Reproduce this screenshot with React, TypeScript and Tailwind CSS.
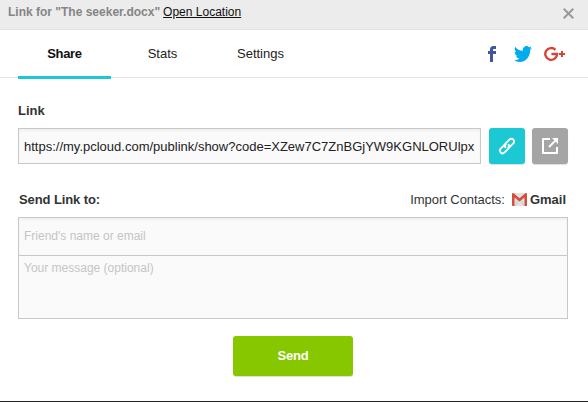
import React from "react";

function FacebookIcon() {
  return (
    <svg width="8" height="16" viewBox="0 0 8 16" fill="#4255a0">
      <path d="M2 16V8H0V5h2V3.6C2 1.3 3.2 0 5.4 0H8v3H6.2C5.3 3 5 3.3 5 4v1h3v3H5v8Z" />
    </svg>
  );
}

function TwitterIcon() {
  return (
    <svg width="18" height="16" viewBox="0 2.2 24 19.6" preserveAspectRatio="none" fill="#00aced">
      <path d="M23.953 4.57a10 10 0 01-2.825.775 4.958 4.958 0 002.163-2.723c-.951.555-2.005.959-3.127 1.184a4.92 4.92 0 00-8.384 4.482C7.69 8.095 4.067 6.13 1.64 3.162a4.822 4.822 0 00-.666 2.475c0 1.71.87 3.213 2.188 4.096a4.904 4.904 0 01-2.228-.616v.06a4.923 4.923 0 003.946 4.827 4.996 4.996 0 01-2.212.085 4.936 4.936 0 004.604 3.417 9.867 9.867 0 01-6.102 2.105c-.39 0-.779-.023-1.17-.067a13.995 13.995 0 007.557 2.209c9.053 0 13.998-7.496 13.998-13.985 0-.21 0-.42-.015-.63A9.935 9.935 0 0024 4.59z" />
    </svg>
  );
}

function GooglePlusIcon() {
  return (
    <svg width="22" height="16" viewBox="0 0 22 16" fill="none" stroke="#d0463b">
      <path d="M11.4 3.8A5.9 5.9 0 1 0 13.1 8H7.4" strokeWidth="2.4" />
      <path d="M15 8h6M18 5v6" strokeWidth="2" />
    </svg>
  );
}

function ChainIcon() {
  return (
    <svg width="18" height="18" viewBox="0 0 18 18" fill="none" stroke="#fff" strokeWidth="1.9" strokeLinecap="round">
      <path d="M7.3 10.2a2.6 2.6 0 0 1 .1-3.6l4-4a2.7 2.7 0 0 1 3.9 3.8l-3 3a2.6 2.6 0 0 1-2 .8" />
      <path d="M10.7 7.8a2.6 2.6 0 0 1-.1 3.6l-4 4a2.7 2.7 0 0 1-3.9-3.8l3-3a2.6 2.6 0 0 1 2-.8" />
    </svg>
  );
}

function OpenIcon() {
  return (
    <svg width="16" height="16" viewBox="0 0 16 16" fill="none" stroke="#fff" strokeWidth="2">
      <path d="M8 1H1v14h14V9" strokeLinejoin="round" />
      <path d="M7 9l6.5-6.5" />
      <path d="M10 0h6v6Z" fill="#fff" stroke="none" />
    </svg>
  );
}

function GmailIcon() {
  return (
    <svg width="15" height="13" viewBox="0 0 15 13">
      <rect width="15" height="13" rx="1" fill="#e0e0dd" />
      <path d="M3 12.5l3-5M12 12.5l-3-5" stroke="#c4c4c0" strokeWidth=".8" />
      <path d="M0 1.2Q0 0 1.3 0L7.5 5.2 13.7 0Q15 0 15 1.2V13h-2.5V4.6L7.5 8.6 2.5 4.6V13H1Q0 13 0 12Z" fill="#d54b3d" />
    </svg>
  );
}

export default function App() {
  return (
    <div className="flex h-[402px] w-[588px] flex-col overflow-hidden border-b border-[#222] bg-white font-['Liberation_Sans',Arial,sans-serif] text-[13px] text-[#333]">
      <header className="flex h-[30px] shrink-0 items-start justify-between border-b border-[#e4e4e4] bg-[#ececec] pr-[14px] pl-2 text-[12px] leading-[14px]">
        <div className="flex gap-[3px] pt-[5px]">
          <span className="font-bold text-[#858585]">Link for "The seeker.docx"</span>
          <a className="text-[#111] underline">Open Location</a>
        </div>
        <svg className="mt-2" width="11" height="11" viewBox="0 0 11 11" stroke="#999" strokeWidth="2">
          <path d="M.7.7l9.6 9.6M10.3.7L.7 10.3" />
        </svg>
      </header>

      <nav className="flex h-12 shrink-0 border-b border-[#e4e4e4] pl-[18px] leading-[15px] text-[#222]">
        <div className="h-[49px] w-[93px] border-b-3 border-[#1cc8d4] pt-4 text-center font-bold tracking-[-0.3px] text-[#111]">Share</div>
        <div className="w-[103px] pt-4 text-center">Stats</div>
        <div className="w-[93px] pt-4 text-center">Settings</div>
        <div className="ml-auto flex items-start pt-4 pr-[22px]">
          <FacebookIcon />
          <span className="mr-3 ml-[18px]"><TwitterIcon /></span>
          <GooglePlusIcon />
        </div>
      </nav>

      <main className="pr-5 pl-[18px]">
        <div className="pt-[25px] leading-[15px] font-bold">Link</div>
        <div className="mt-[10px] flex">
          <div className="h-9 w-[463px] overflow-hidden border border-[#c8c8c8] bg-[#fafafa] pl-[5px] leading-[35px] whitespace-nowrap text-[#222] shadow-[inset_0_2px_2px_#f0f0f0]">
            https://my.pcloud.com/publink/show?code=XZew7C7ZnBGjYW9KGNLORUlpx
          </div>
          <div className="ml-2 flex size-9 items-center justify-center rounded-[3px] bg-[#1cc8d4] shadow-[0_1px_1px_#ddd]">
            <ChainIcon />
          </div>
          <div className="ml-[7px] flex size-9 items-center justify-center rounded-[3px] bg-[#a5a5a5] shadow-[0_1px_1px_#ddd]">
            <OpenIcon />
          </div>
        </div>

        <div className="mt-7 flex h-[15px] justify-between leading-[15px]">
          <span className="pl-px font-bold tracking-[-0.1px]">Send Link to:</span>
          <div className="flex pr-[2px]">
            <span className="tracking-[-0.04px]">Import Contacts:</span>
            <span className="mt-px mr-[3px] ml-[7px]"><GmailIcon /></span>
            <span className="font-bold">Gmail</span>
          </div>
        </div>

        <div className="mt-[10px] h-[102px] border border-[#c8c8c8] bg-[#fafafa] text-[12px] text-[#c5c5c5]">
          <div className="h-[38px] border-b border-[#c8c8c8] pl-[5px] leading-[36px] shadow-[inset_0_2px_2px_#f0f0f0]">Friend's name or email</div>
          <div className="pt-[5px] pl-[5px] leading-[14px]">Your message (optional)</div>
        </div>
        <div className="mx-auto mt-[17px] h-10 w-[120px] rounded-[3px] bg-[#87c700] text-center leading-[39px] font-bold tracking-[-0.2px] text-white shadow-[0_1px_1px_#ddd]">Send</div>
      </main>
    </div>
  );
}
